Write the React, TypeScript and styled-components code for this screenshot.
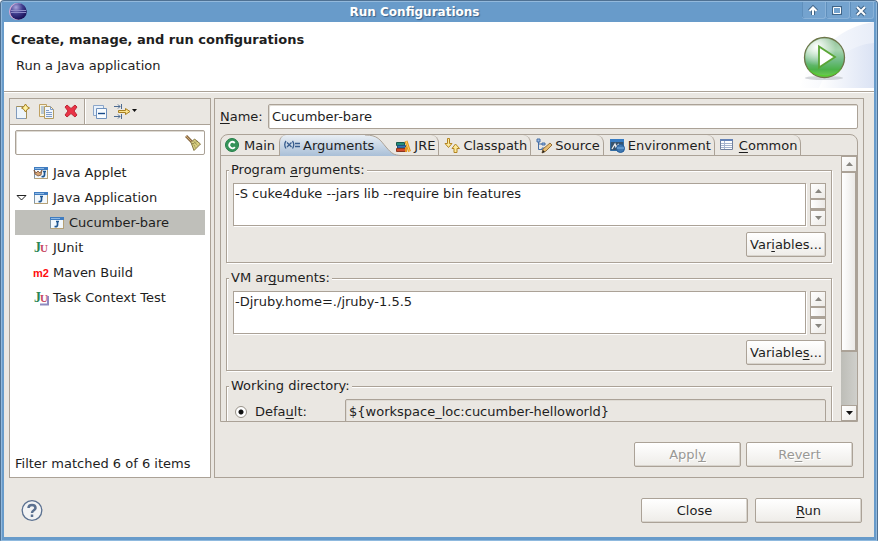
import React, { useState } from "react";
import styled, { createGlobalStyle, css } from "styled-components";

const line = "#aba297";
const face = "#eae7e2";
const ink = "#1e1e1e";

const GlobalStyle = createGlobalStyle`
  * { box-sizing: border-box; }
  body { margin: 0; }
  body, button, input, textarea {
    font-family: "DejaVu Sans", sans-serif;
    font-size: 13px;
    line-height: 16px;
    color: ${ink};
  }
  button, input, textarea { margin: 0; }
  u { text-underline-offset: 2px; text-decoration-thickness: 1px; text-decoration-skip-ink: none; }
  svg { display: block; }
`;

const Window = styled.div`
  display: flex;
  flex-direction: column;
  height: 100vh;
  background: ${face};
  border: 1px solid #4f7193;
  border-bottom-color: #8fb9de;
  border-radius: 4px 4px 0 0;
  box-shadow: inset 1px 1px 0 #93b9dc, inset -1px 0 0 #93b9dc, inset 0 0 0 3px #689bca;
  padding: 1px 3px 3px;
`;

const TitleBar = styled.header`
  display: grid;
  grid-template-columns: auto 1fr auto;
  flex: none;
  height: 20px;
  margin: 0 -2px;
  padding: 0 2px 0 5px;
  background: #689bca;
`;

const WindowTitle = styled.h1`
  margin: 0;
  font-size: 12px;
  line-height: 20px;
  text-align: center;
  color: #fff;
  text-shadow: 1px 1px 1px #3c6288;
`;

const WindowButtons = styled.div`
  display: flex;
  justify-content: flex-end;
`;

const WindowButton = styled.button`
  width: 24px;
  height: 17px;
  padding: 0 0 0 4px;
  border: solid #8ab2d8;
  border-width: 0 1px 1px 0;
  box-shadow: inset 1px 0 0 #5f8fbc;
  border-radius: 0 0 3px 3px;
  background: #74a3cf;
`;

const Banner = styled.section`
  display: flex;
  justify-content: space-between;
  flex: none;
  height: 70px;
  background: #fff;
  border-bottom: 1px solid ${line};
  box-shadow: 0 1px 0 #fff;
`;

const BannerText = styled.div`
  padding: 10px 7px;
`;

const BannerTitle = styled.h2`
  margin: 0 0 10px;
  font-size: 13px;
  line-height: 16px;
`;

const BannerMessage = styled.p`
  margin: 0 5px;
`;

const Columns = styled.main`
  display: grid;
  grid-template-columns: 202px 1fr;
  gap: 3px;
  flex: 1;
  min-height: 0;
  padding: 6px 10px 0 5px;
`;

const Sidebar = styled.nav`
  display: flex;
  flex-direction: column;
  border: 1px solid ${line};
  background: #fff;
`;

const Toolbar = styled.div`
  display: flex;
  align-items: center;
  gap: 5px;
  height: 26px;
  padding: 0 5px;
  background: ${face};
  border-bottom: 1px solid ${line};
`;

const ToolGroup = styled.div<{ $ruled?: boolean }>`
  display: flex;
  align-items: center;
  gap: 8px;
  height: 25px;
  ${(p) => p.$ruled && css`
    padding-left: 7px;
    border-left: 1px solid ${line};
    box-shadow: inset 1px 0 0 #fff;
    gap: 6px;
  `}
`;

const ToolButton = styled.button`
  padding: 0;
  border: 0;
  background: none;
`;

const SearchBox = styled.div`
  display: flex;
  align-items: center;
  height: 25px;
  margin: 5px;
  padding: 0 3px;
  border: 1px solid ${line};
  border-radius: 2px;
  box-shadow: inset 1px 1px 0 #dedad3;
`;

const SearchInput = styled.input`
  flex: 1;
  min-width: 0;
  border: 0;
  background: none;
  outline: none;
`;

const Tree = styled.ul`
  flex: 1;
  margin: 0;
  padding: 0 5px;
  list-style: none;
`;

const TreeRow = styled.li<{ $selected?: boolean; $depth: number }>`
  display: flex;
  align-items: center;
  gap: 4px;
  height: 25px;
  padding-left: ${(p) => p.$depth * 16}px;
  background: ${(p) => (p.$selected ? "#bfbfba" : "none")};
`;

const Twisty = styled.span`
  display: flex;
  flex: none;
  width: 14px;
`;

const FilterStatus = styled.p`
  margin: 0;
  padding: 5px;
`;

const Editor = styled.section`
  display: flex;
  flex-direction: column;
  min-width: 0;
  min-height: 0;
  padding: 5px;
  border: 1px solid ${line};
`;

const NameRow = styled.div`
  display: flex;
  align-items: center;
  gap: 6px;
  label { width: 42px; }
`;

const TextInput = styled.input<{ $disabledLook?: boolean }>`
  flex: 1;
  min-width: 0;
  height: 25px;
  padding: 0 3px;
  border: 1px solid ${line};
  border-radius: 2px;
  outline: none;
  box-shadow: inset 1px 1px 0 #dedad3;
  background: ${(p) => (p.$disabledLook ? face : "#fff")};
`;

const TabFolder = styled.div`
  display: flex;
  flex-direction: column;
  flex: 1;
  min-height: 0;
  margin-top: 5px;
  border: 1px solid ${line};
  border-radius: 8px 8px 0 0;
`;

const TabList = styled.div`
  display: flex;
  flex: none;
  height: 21px;
  border-bottom: 1px solid ${line};
`;

const Tab = styled.button<{ $noEdge?: boolean }>`
  display: flex;
  align-items: center;
  gap: 3px;
  height: 21px;
  padding: ${(p) => (p.$noEdge ? "0 4px" : "0 3px 0 5px")};
  border: 0;
  border-right: ${(p) => (p.$noEdge ? "0" : `1px solid ${line}`)};
  border-radius: 0 8px 0 0;
  background: none;
  white-space: nowrap;
`;

const ActiveTab = styled(Tab)`
  position: relative;
  padding: 0 16px 0 5px;
  border: 0;
  isolation: isolate;
  &::before {
    content: "";
    position: absolute;
    z-index: -1;
    inset: 0 25px 0 0;
    border-left: 1px solid ${line};
    border-radius: 7px 0 0 0;
    background: linear-gradient(#e8eef4, #a9bfd7);
  }
`;

const TabTail = styled.svg`
  position: absolute;
  z-index: -1;
  top: 0;
  right: -11px;
`;

const TabBody = styled.div`
  display: flex;
  flex: 1;
  min-height: 0;
  overflow: hidden;
`;

const Groups = styled.div`
  flex: 1;
  min-width: 0;
  padding: 6px 9px 0 5px;
`;

const Group = styled.fieldset`
  min-width: 0;
  margin: 0 0 7px;
  padding: 5px 5px 5px 6px;
  border: 1px solid ${line};
  box-shadow: 1px 1px 0 #fff, inset 1px 1px 0 #fff;
`;

const Legend = styled.legend`
  margin-left: -4px;
  padding: 0 2px;
  background: ${face};
`;

const AreaRow = styled.div`
  display: flex;
  gap: 4px;
  height: 43px;
`;

const Area = styled.textarea`
  flex: 1;
  min-width: 0;
  padding: 2px 1px;
  border: 1px solid ${line};
  box-shadow: 1px 1px 0 #fff;
  outline: none;
  resize: none;
  overflow: hidden;
`;

const ButtonRow = styled.div<{ $place?: "group" | "editor" }>`
  display: flex;
  justify-content: flex-end;
  gap: 5px;
  padding: ${(p) => (p.$place === "editor" ? "20px 5px 5px" : "6px 0 0")};
`;

const Button = styled.button<{ $narrow?: boolean }>`
  width: ${(p) => (p.$narrow ? 80 : 107)}px;
  height: 25px;
  padding: 0;
  border: 1px solid ${line};
  border-radius: 2px;
  box-shadow: inset -1px -1px 0 #d8d4cd;
  background: linear-gradient(#fff, #eeece8);
  white-space: nowrap;
  &:disabled { color: #999895; text-shadow: 1px 1px 0 #fff; }
`;

const DirectoryRow = styled.div`
  display: flex;
  align-items: center;
  gap: 8px;
  padding-left: 2px;
  label { width: 82px; }
`;

const Radio = styled.input`
  appearance: none;
  width: 12px;
  height: 12px;
  border: 1px solid #99938a;
  border-radius: 50%;
  background: #fff;
  &:checked { background: radial-gradient(circle, #111 0 2px, #fff 3px); }
`;

const ScrollTrack = styled.div`
  display: flex;
  flex-direction: column;
  flex: none;
  width: 16px;
  background: linear-gradient(90deg, #bdbdb7, #cfcfcb);
`;

const ScrollThumb = styled.div<{ $main?: boolean }>`
  flex: ${(p) => (p.$main ? "0 0 68%" : "1")};
  border: 1px solid ${line};
  border-bottom-width: 2px;
  border-right-width: ${(p) => (p.$main ? 2 : 1)}px;
  background: linear-gradient(90deg, #fff, #ebe9e6);
`;

const ScrollButton = styled.button<{ $last?: boolean }>`
  display: grid;
  place-items: center;
  flex: none;
  height: 16px;
  padding: 0;
  border: 1px solid ${line};
  margin-top: ${(p) => (p.$last ? "auto" : "0")};
  background: linear-gradient(135deg, #fff, #eceae6);
`;

const Footer = styled.footer`
  display: flex;
  align-items: center;
  flex: none;
  gap: 7px;
  height: 59px;
  padding: 6px 12px 0 17px;
`;

const HelpButton = styled.button`
  margin-right: auto;
  padding: 0;
  border: 0;
  background: none;
`;

const Icon = ({ children, w = 16 }: { children: React.ReactNode; w?: number }) => (
  <svg width={w} height="16" viewBox={`0 0 ${w} 16`} fill="none" aria-hidden="true">{children}</svg>
);

const Glyph = ({ x, y, size, color, children, serif = true }: { x: number; y: number; size: number; color: string; children: string; serif?: boolean }) => (
  <text x={x} y={y} fontSize={size} fill={color} fontWeight="bold" fontFamily={serif ? '"Liberation Serif", serif' : '"Liberation Sans", sans-serif'}>{children}</text>
);

const EclipseLogo = () => (
  <svg width="20" height="20" viewBox="0 0 20 20" aria-hidden="true">
    <defs><radialGradient id="globe" cx=".35" cy=".25" r=".8"><stop stopColor="#a9a5dc" /><stop offset=".5" stopColor="#3f3c8d" /><stop offset="1" stopColor="#120a50" /></radialGradient></defs>
    <circle cx="10.500" cy="9.500" r="8.500" fill="#d9a8d4" />
    <circle cx="11.500" cy="9.500" r="8.300" fill="url(#globe)" />
    <path d="M4 8.500h15M4 10.500h15" stroke="#8d8cc8" />
  </svg>
);

const RunBanner = () => (
  <svg width="100" height="66" viewBox="0 0 100 66" aria-hidden="true">
    <defs>
      <linearGradient id="sweep"><stop stopColor="#fff" /><stop offset="1" stopColor="#dbe3f4" /></linearGradient>
      <linearGradient id="ball" x2="0" y2="1"><stop stopColor="#8fbf96" /><stop offset=".3" stopColor="#a9d5b0" /><stop offset=".6" stopColor="#6cba80" /><stop offset=".8" stopColor="#4cb24a" /><stop offset="1" stopColor="#75cf54" /></linearGradient>
      <radialGradient id="shine" cx=".3" cy=".22" r=".5"><stop stopColor="#fff" /><stop offset="1" stopColor="#fff" stopOpacity="0" /></radialGradient>
    </defs>
    <path d="M25 66C42 25 70 4 100 0V66Z" fill="url(#sweep)" opacity=".65" />
    <path d="M45 66C56 38 76 23 100 21V66Z" fill="url(#sweep)" />
    <ellipse cx="50" cy="56" rx="19" ry="2" fill="#b9bcc3" opacity=".6" />
    <circle cx="50.500" cy="35.500" r="20" fill="url(#ball)" stroke="#6d7549" strokeWidth="1.300" />
    <circle cx="50.500" cy="35.500" r="19" fill="url(#shine)" />
    <path d="M33 45c7 10 27 12 35 0-4 12-29 13-35 0Z" fill="#50cf24" opacity=".8" />
    <path d="M45 24.500v21l16-10.500Z" fill="#fff" stroke="#5aa536" strokeWidth="1.800" />
  </svg>
);

const WindowGlyph = ({ d, w = 2 }: { d: string; w?: number }) => (
  <svg width="14" height="14" viewBox="0 0 14 14" fill="none" aria-hidden="true">
    <path d={d} stroke="#406588" strokeWidth={w + 2} />
    <path d={d} stroke="#fff" strokeWidth={w} />
  </svg>
);

const NewIcon = () => <Icon><path d="M1.500 2.500h10v12h-10Z" fill="#edf5fc" stroke="#a28f59" /><path d="M1.500 3v11.500h9" stroke="#819bbd" /><path d="M10.500 0 12 2.500l2.500 1.500L12 5.500 10.500 8 9 5.500 6.500 4 9 2.500Z" fill="#fff2a2" stroke="#a67e20" /></Icon>;
const CopyIcon = () => <Icon><path d="M.500.500h7v12h-7Z" fill="#f7f4df" stroke="#c0a162" /><path d="M2 3h3M2 5h3M2 7h3M2 9h3" stroke="#7e9cc8" /><path d="M5.500 2.500h6l3 3v9h-9Z" fill="#f0f6fd" stroke="#b29b61" /><path d="M11.500 2.500v3h3M7 6.500h3M7 8.500h6M7 10.500h6M7 12.500h6" stroke="#7e9cc8" /></Icon>;
const DeleteIcon = () => <Icon><path d="m2 3 2-2 4 3.500L12 1l2 2-3 4 3 4-2 2-4-3.500L4 13l-2-2 3-4Z" fill="#ea3447" stroke="#bd2937" /></Icon>;
const CollapseIcon = () => <Icon><path d="M1.500 1.500h10v10h-10Z" fill="#e9f2fc" stroke="#8ba6c9" /><path d="M4.500 4.500h10v10h-10Z" fill="#f8fcff" stroke="#6f91bd" /><path d="M6 9.500h7" stroke="#174b8a" strokeWidth="1.400" /></Icon>;
const FilterIcon = () => (
  <Icon w={25}>
    <path d="M0 2.500h6M0 12.500h6M4 .5l2 2-2 2M4 10.500l2 2-2 2M7.500 0v5M7.500 10v5" stroke="#4d6b91" />
    <path d="M4.500 6.500h7v-2L16 7.500l-4.500 3v-2h-7Z" fill="#fbe38b" stroke="#a87f20" />
    <path d="M18 5h5l-2.500 3Z" fill="#111" />
  </Icon>
);
const BroomIcon = () => <Icon><path d="m1 1 6 6" stroke="#8a6a43" strokeWidth="3" /><path d="m1 1 6 6" stroke="#cea870" /><path d="M6 7.500 9.500 4 15.500 9 9 15.500Z" fill="#d8cf80" stroke="#837542" /><path d="m8 8 2.500 5M9 6.500l4 4.500M7 9l6-3" stroke="#807744" strokeDasharray="1 1" /></Icon>;

const JavaIcon = ({ applet = false }: { applet?: boolean }) => (
  <Icon>
    <path d="M1.500 2.500h13v11h-13Z" fill="#f2f8fd" stroke="#7f95a6" />
    <path d="M1 2h14v3H1Z" fill="#3f7cc0" /><path d="M2 3.500h9" stroke="#8fb9e4" />
    <path d="M1.500 13.500h13V5" stroke="#b6a176" />
    <path d={applet ? "M11.500 6v4q0 2-3 1.500M10 6.500h3" : "M8.500 6v4q0 2-3 1.500M7 6.500h3"} stroke="#1f5792" strokeWidth="1.700" />
    {applet && <path d="m1 5 2 3 2-2 2 2 2-3-1 5-3 1-3-2Z" fill="#d5a475" stroke="#76513a" strokeWidth=".8" />}
  </Icon>
);
const JUnitIcon = ({ task = false }: { task?: boolean }) => (
  <Icon>
    {task && <path d="M7 14.500h8V6" stroke="#8d8bc0" strokeWidth="2" />}
    <Glyph x={1} y={12} size={14} color="#2c8654">J</Glyph><Glyph x={7} y={12} size={11} color="#c64660">U</Glyph>
  </Icon>
);
const MavenIcon = () => <svg width="16" height="16" aria-hidden="true"><Glyph x={0} y={12} size={11} color="#ff0d0d" serif={false}>m2</Glyph></svg>;

const MainIcon = () => <Icon><circle cx="7" cy="7" r="6.500" fill="#36945a" stroke="#257f49" /><path d="M9.800 5Q7 2.500 5 5T5.500 9.500 9.800 9" stroke="#fff" strokeWidth="1.800" /></Icon>;
const ArgsIcon = () => <Icon><path d="M2 3Q-.500 6.500 2 10.500M8.500 3q2.500 3.500 0 7.500M3 4.500l4.500 4.500M7.500 4.500l-4.500 4.500M11 5.500h5M11 8.500h5" stroke="#375d8e" strokeWidth="1.300" /></Icon>;
const JreIcon = () => <Icon><path d="M1.500 4.500h8v3h-8Z" fill="#238d7a" stroke="#17594d" /><path d="M2.500 7.500h8v2.500h-8Z" fill="#3275b5" stroke="#20517d" /><path d="M1.500 10.500h9v3h-9Z" fill="#d24a2b" stroke="#8c3820" /><path d="m11 3 3.500 10.500" stroke="#e39622" strokeWidth="3" /><path d="m11 3 3.500 10.500" stroke="#f9d15b" /><path d="M11 9v5" stroke="#e39622" strokeWidth="2" /></Icon>;
const ClasspathIcon = () => <Icon><path d="M3.500.5h2v5h2.500l-3.500 4-3.500-4h2.500ZM10 14.500h3v-4h2.500L11.500 6 8 10.500h2Z" fill="#fce99a" stroke="#b38421" /></Icon>;
const SourceIcon = () => <Icon><path d="M1 1h3v3H1ZM6 5h3v2H6ZM6 10h3v2H6Z" fill="#9cbce4" stroke="#476fa5" /><path d="M2.500 4v7.500H6M2.500 6H6" stroke="#476fa5" /><path d="m6 15 1-4 7-6 2 2-6 6Z" fill="#e8bd72" stroke="#94703a" /><path d="m6 15 1-3 2 2Z" fill="#222" /></Icon>;
const EnvIcon = () => <Icon><path d="M1.500 1.500h13v11h-13Z" fill="#36536e" stroke="#346da2" /><path d="M1 1h14v3H1Z" fill="#377cc4" /><path d="m3 11 3-5 1 3 3-3" stroke="#eee" strokeWidth="1.300" /><circle cx="11.500" cy="10.500" r="4" fill="#3f78b2" stroke="#245c99" /><path d="M8 10h7" stroke="#83b5e4" /></Icon>;
const CommonIcon = () => <Icon><path d="M.500 1.500h12v10h-12Z" fill="#fff" stroke="#71819e" /><path d="M0 1h13v2H0Z" fill="#6482b6" /><path d="M1 5.500h11M1 7.500h11M1 9.500h11M4.500 3v8" stroke="#a6b4ce" /></Icon>;

const Arrow = ({ down, dim }: { down?: boolean; dim?: boolean }) => (
  <svg width="7" height="4" viewBox="0 0 7 4" aria-hidden="true"><path d={down ? "M0 0h7L3.500 4Z" : "M0 4h7L3.500 0Z"} fill={dim ? "#888680" : "#111"} /></svg>
);

const SmallScroll = () => (
  <ScrollTrack>
    <ScrollButton aria-label="Scroll up"><Arrow dim /></ScrollButton>
    <ScrollThumb />
    <ScrollButton aria-label="Scroll down"><Arrow down dim /></ScrollButton>
  </ScrollTrack>
);

const launchTypes = [
  { label: "Java Applet", icon: <JavaIcon applet />, depth: 0 },
  { label: "Java Application", icon: <JavaIcon />, depth: 0, open: true },
  { label: "Cucumber-bare", icon: <JavaIcon />, depth: 1 },
  { label: "JUnit", icon: <JUnitIcon />, depth: 0 },
  { label: "Maven Build", icon: <MavenIcon />, depth: 0 },
  { label: "Task Context Test", icon: <JUnitIcon task />, depth: 0 },
];

export default function App() {
  const [name, setName] = useState("Cucumber-bare");
  const [selected, setSelected] = useState("Cucumber-bare");
  const [program, setProgram] = useState("-S cuke4duke --jars lib --require bin features");
  const [vm, setVm] = useState("-Djruby.home=./jruby-1.5.5");

  return (
    <>
      <GlobalStyle />
      <Window>
        <TitleBar>
          <EclipseLogo />
          <WindowTitle>Run Configurations</WindowTitle>
          <WindowButtons>
            <WindowButton aria-label="Shade"><WindowGlyph d="M7 12V5M3.500 8 7 4.500 10.500 8" /></WindowButton>
            <WindowButton aria-label="Maximize">
              <svg width="14" height="14" viewBox="0 0 14 14" fill="none" aria-hidden="true">
                <path d="M2 3h10v9H2Z" fill="#406588" /><path d="M3.500 4.500h7v6h-7Z" stroke="#fff" fill="#74a3cf" />
              </svg>
            </WindowButton>
            <WindowButton aria-label="Close window"><WindowGlyph d="m3 4 8 8M11 4l-8 8" /></WindowButton>
          </WindowButtons>
        </TitleBar>

        <Banner>
          <BannerText>
            <BannerTitle>Create, manage, and run configurations</BannerTitle>
            <BannerMessage>Run a Java application</BannerMessage>
          </BannerText>
          <RunBanner />
        </Banner>

        <Columns>
          <Sidebar aria-label="Launch configurations">
            <Toolbar>
              <ToolGroup>
                <ToolButton aria-label="New"><NewIcon /></ToolButton>
                <ToolButton aria-label="Duplicate"><CopyIcon /></ToolButton>
                <ToolButton aria-label="Delete"><DeleteIcon /></ToolButton>
              </ToolGroup>
              <ToolGroup $ruled>
                <ToolButton aria-label="Collapse all"><CollapseIcon /></ToolButton>
                <ToolButton aria-label="Filter"><FilterIcon /></ToolButton>
              </ToolGroup>
            </Toolbar>
            <SearchBox>
              <SearchInput aria-label="Filter text" />
              <ToolButton aria-label="Clear"><BroomIcon /></ToolButton>
            </SearchBox>
            <Tree role="tree">
              {launchTypes.map((t) => (
                <TreeRow key={t.label} role="treeitem" aria-selected={selected === t.label} $selected={selected === t.label} $depth={t.depth} onClick={() => setSelected(t.label)}>
                  <Twisty>
                    {t.open && <svg width="12" height="8" viewBox="0 0 12 8"><path d="M2 1.500h9L6.500 6Z" fill="#fff" stroke="#222" /></svg>}
                  </Twisty>
                  {t.icon}
                  {t.label}
                </TreeRow>
              ))}
            </Tree>
            <FilterStatus>Filter matched 6 of 6 items</FilterStatus>
          </Sidebar>

          <Editor>
            <NameRow>
              <label htmlFor="name"><u>N</u>ame:</label>
              <TextInput id="name" value={name} onChange={(e) => setName(e.target.value)} />
            </NameRow>

            <TabFolder>
              <TabList role="tablist">
                <Tab role="tab" $noEdge><MainIcon />Main</Tab>
                <ActiveTab role="tab" aria-selected="true">
                  <TabTail width="36" height="21" viewBox="0 0 36 21" aria-hidden="true">
                    <defs><linearGradient id="tail" x2="0" y2="1"><stop stopColor="#e8eef4" /><stop offset="1" stopColor="#a9bfd7" /></linearGradient></defs>
                    <path d="M0 0C13 0 15 5 21 12S29 20 36 20.500V21H0Z" fill="url(#tail)" />
                    <path d="M0 0C13 0 15 5 21 12S29 20 36 20.500" fill="none" stroke={line} />
                  </TabTail>
                  <ArgsIcon />Arguments
                </ActiveTab>
                <Tab role="tab"><JreIcon />JRE</Tab>
                <Tab role="tab"><ClasspathIcon />Classpath</Tab>
                <Tab role="tab"><SourceIcon />Source</Tab>
                <Tab role="tab"><EnvIcon />Environment</Tab>
                <Tab role="tab"><CommonIcon /><span><u>C</u>ommon</span></Tab>
              </TabList>
              <TabBody role="tabpanel">
                <Groups>
                  <Group>
                    <Legend><label htmlFor="program">Program <u>a</u>rguments:</label></Legend>
                    <AreaRow>
                      <Area id="program" value={program} onChange={(e) => setProgram(e.target.value)} />
                      <SmallScroll />
                    </AreaRow>
                    <ButtonRow><Button $narrow>Var<u>i</u>ables...</Button></ButtonRow>
                  </Group>
                  <Group>
                    <Legend><label htmlFor="vm">VM ar<u>g</u>uments:</label></Legend>
                    <AreaRow>
                      <Area id="vm" value={vm} onChange={(e) => setVm(e.target.value)} />
                      <SmallScroll />
                    </AreaRow>
                    <ButtonRow><Button $narrow>Variable<u>s</u>...</Button></ButtonRow>
                  </Group>
                  <Group>
                    <Legend>Working directory:</Legend>
                    <DirectoryRow>
                      <Radio type="radio" id="default-dir" name="directory" defaultChecked />
                      <label htmlFor="default-dir">Defa<u>u</u>lt:</label>
                      <TextInput aria-label="Default directory" readOnly $disabledLook value="${workspace_loc:cucumber-helloworld}" />
                    </DirectoryRow>
                  </Group>
                </Groups>
                <ScrollTrack>
                  <ScrollButton aria-label="Scroll page up"><Arrow dim /></ScrollButton>
                  <ScrollThumb $main />
                  <ScrollButton $last aria-label="Scroll page down"><Arrow down /></ScrollButton>
                </ScrollTrack>
              </TabBody>
            </TabFolder>

            <ButtonRow $place="editor">
              <Button disabled>Appl<u>y</u></Button>
              <Button disabled>Re<u>v</u>ert</Button>
            </ButtonRow>
          </Editor>
        </Columns>

        <Footer>
          <HelpButton aria-label="Help">
            <svg width="22" height="22" viewBox="0 0 22 22" aria-hidden="true">
              <circle cx="11" cy="10.500" r="9.800" fill="#f2f3f4" stroke="#5a7090" strokeWidth="1.300" />
              <path d="M7.500 8Q7.500 5 11 5T14.500 8C14.500 10.500 11 10 11 13M11 14.500v2.500" fill="none" stroke="#5a7090" strokeWidth="2.500" />
            </svg>
          </HelpButton>
          <Button>Close</Button>
          <Button><u>R</u>un</Button>
        </Footer>
      </Window>
    </>
  );
}
